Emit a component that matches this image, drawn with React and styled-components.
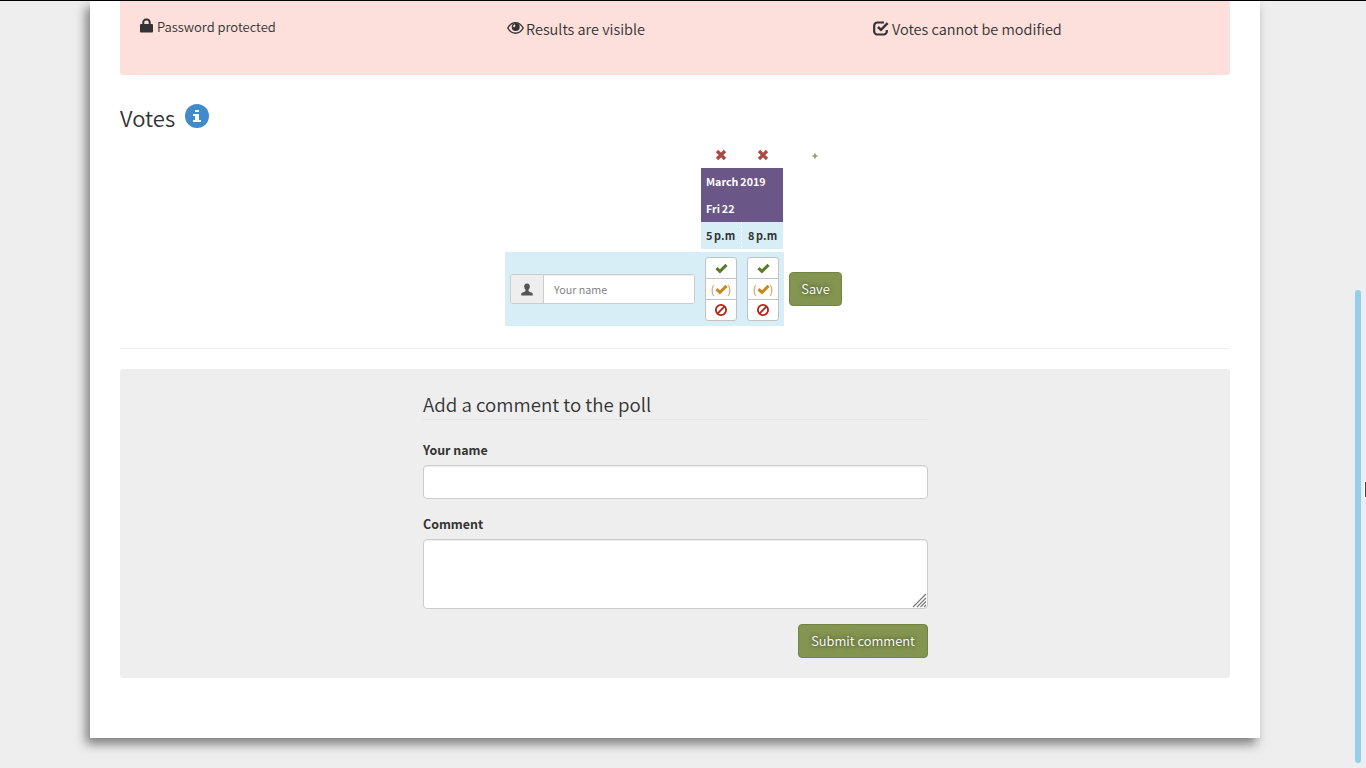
import React from 'react';
import styled, { createGlobalStyle } from 'styled-components';

const Global = createGlobalStyle`
  *, *::before, *::after { box-sizing: border-box; }
  html, body { margin: 0; height: 768px; overflow: hidden; }
  body {
    background: #eee;
    color: #333;
    font-family: "Noto Sans CJK SC", "Noto Sans", sans-serif;
    font-size: 14px;
    font-weight: 350;
    line-height: 20px;
  }
  h2, h3, p { margin: 0; font-weight: 350; }
  input, textarea, button { font-family: inherit; font-weight: 350; margin: 0; outline: none; }
`;

const Screen = styled.div`
  position: relative;
  height: 768px;
  padding: 0 106px 0 90px;
  border-top: 1px solid #000;
  overflow: hidden;
`;

const Page = styled.main`
  height: 737px;
  padding: 0 30px;
  background: #fff;
  box-shadow: -4px 6px 10px 0 rgba(50, 50, 50, 0.6);
`;

const Alert = styled.section`
  display: grid;
  grid-template-columns: 367px 366px 1fr;
  height: 74px;
  padding: 14px 20px 0;
  background: #fddfdb;
  border-radius: 0 0 3px 3px;
`;

const Fact = styled.p`
  display: flex;
  align-items: flex-start;
  gap: ${(p) => p.$gap}px;
  padding-top: ${(p) => p.$top || 0}px;
  font-size: ${(p) => p.$size || 14.5}px;
  line-height: 24px;
  white-space: nowrap;
  svg { flex: none; margin-top: ${(p) => p.$iconTop || 0}px; }
`;

const VotesTitle = styled.h2`
  display: flex;
  align-items: flex-start;
  gap: 10px;
  height: 68px;
  padding-top: 27px;
  font-size: 22px;
  line-height: 30px;
  svg { flex: none; margin: 2px 0 0 -0.5px; }
`;

const Poll = styled.div`
  display: grid;
  grid-template-columns: 196px 41px 42px 63px;
  grid-template-rows: 25px 54px 27px 3px 74px;
  width: 342px;
  margin-left: 385px;
`;

const IconCell = styled.div`
  display: flex;
  justify-content: center;
  align-items: flex-start;
  grid-row: 1;
  grid-column: ${(p) => p.$col};
  padding-top: ${(p) => p.$top}px;
  padding-right: ${(p) => p.$shift || 0}px;
`;

const Month = styled.div`
  grid-row: 2;
  grid-column: 2 / 4;
  width: 82px;
  padding-left: 5px;
  background: #6a5687;
  color: #fff;
  font-size: 10.7px;
  font-weight: 700;
  line-height: 27px;
  word-spacing: -0.5px;
`;

const Hour = styled.div`
  grid-row: 3;
  grid-column: ${(p) => p.$col};
  width: ${(p) => (p.$last ? 41 : 42)}px;
  padding-left: ${(p) => (p.$last ? 6 : 5)}px;
  border-right: ${(p) => (p.$last ? '0' : '2px dashed #fff')};
  background: #d8eef6;
  font-size: 10.9px;
  font-weight: 700;
  line-height: 27px;
  height: 27px;
  white-space: nowrap;
  word-spacing: -1px;
  letter-spacing: 0.1px;
  ${(p) => !p.$last && `
    border-image: repeating-linear-gradient(#fff 0 2px, #d8eef6 2px 4px) 0 2 0 0;
  `}
`;

const VoteRow = styled.div`
  grid-row: 5;
  grid-column: 1 / 4;
  display: flex;
  align-items: flex-start;
  gap: 10px;
  padding: 5px;
  background: #d8eef6;
`;

const NameGroup = styled.div`
  display: flex;
  flex: none;
  width: 185px;
  height: 30px;
  margin-top: 17px;
  border: 1px solid #ccc;
  border-radius: 3px;
  background: #fff;
  overflow: hidden;
`;

const Addon = styled.span`
  display: flex;
  align-items: center;
  justify-content: center;
  width: 33px;
  border-right: 1px solid #ccc;
  background: #eee;
`;

const NameInput = styled.input`
  flex: 1;
  min-width: 0;
  padding: 0 10px;
  border: 0;
  background: #fff;
  box-shadow: inset 0 1px 1px rgba(0, 0, 0, 0.075);
  font-size: 10.8px;
  &::placeholder { color: #777; opacity: 1; }
`;

const Choices = styled.div`
  flex: none;
  width: 32px;
  height: 64px;
  border: 1px solid #c2c2c2;
  border-radius: 3px;
  background: #fff;
`;

const Choice = styled.div`
  display: flex;
  align-items: center;
  justify-content: center;
  height: ${(p) => p.$h}px;
  border-bottom: ${(p) => (p.$last ? '0' : '1px solid #c2c2c2')};
  color: #c88a1d;
  font-size: 11px;
  font-weight: 400;
  line-height: 18px;
`;

const Button = styled.button`
  height: 34px;
  width: ${(p) => p.$w}px;
  padding: 0 0 1px;
  border: 1px solid #738440;
  border-radius: 4px;
  background: #849551;
  color: #fff;
  font-size: 12.9px;
  line-height: 20px;
  text-shadow: 0 0 5px rgba(0, 0, 0, 0.65);
  white-space: nowrap;
`;

const SaveCell = styled.div`
  grid-row: 5;
  grid-column: 4;
  padding: 20px 0 0 5px;
`;

const Rule = styled.div`
  height: 1px;
  margin: 22px 0 20px;
  background: #eee;
`;

const CommentPanel = styled.section`
  height: 309px;
  padding: 20px 302px 0 303px;
  background: #eee;
  border-radius: 3px;
`;

const Legend = styled.h3`
  height: 31px;
  border-bottom: 1px solid #e3e3e3;
  font-size: 18.7px;
  line-height: 29px;
`;

const Label = styled.label`
  display: block;
  height: 20px;
  margin: ${(p) => p.$top}px 0 5px;
  font-size: 12.4px;
  font-weight: 700;
`;

const Field = styled.input`
  display: block;
  width: 505px;
  height: 34px;
  border: 1px solid #ccc;
  border-radius: 4px;
  background: #fff;
  box-shadow: inset 0 1px 1px rgba(0, 0, 0, 0.075);
`;

const AreaWrap = styled.div`
  position: relative;
  height: 70px;
  svg { position: absolute; right: 1px; bottom: 1px; }
`;

const Area = styled(Field)`
  height: 70px;
  resize: none;
`;

const Actions = styled.div`
  display: flex;
  justify-content: flex-end;
  margin-top: 15px;
`;

const ScrollTrack = styled.div`
  position: absolute;
  top: 0;
  right: 0;
  width: 16px;
  height: 768px;
  padding: 289px 5px 0;
  background: #eceef0;
`;

const ScrollThumb = styled.div`
  width: 6px;
  height: 473px;
  border-radius: 3px;
  background: #93cfe9;
`;

const Pointer = styled.div`
  position: absolute;
  right: 0;
  top: 480px;
  width: 2px;
  height: 17px;
  border: 1px solid #fff;
  border-right: 0;
  background: #444;
`;

const LockIcon = () => (
  <svg width="14" height="15" viewBox="0 0 14 15">
    <path d="M3.300 7V4.200a2.600 2.600 0 0 1 2.600-2.600h1.200a2.600 2.600 0 0 1 2.600 2.600V7" fill="none" stroke="#333" strokeWidth="2" />
    <rect x="0" y="6" width="13" height="8.500" rx="0.9" fill="#333" />
  </svg>
);

const EyeIcon = () => (
  <svg width="17" height="14" viewBox="0 0 17 14">
    <path d="M.8 7C2.8 3.600 5.400 1.600 8.500 1.600S14.200 3.600 16.200 7C14.200 10.400 11.600 12.200 8.500 12.200S2.800 10.400.8 7Z" fill="none" stroke="#333" strokeWidth="1.400" />
    <circle cx="8.700" cy="6" r="4" fill="#333" />
    <path d="M5.900 5.500q.3-2 2-2.300l.5 1.800-1.300 1.600Z" fill="#fddfdb" />
  </svg>
);

const CheckBoxIcon = () => (
  <svg width="16" height="15" viewBox="0 0 16 15">
    <path d="M11 1.500H4.300A3.100 3.100 0 0 0 1.200 4.600v5.800a3.100 3.100 0 0 0 3.100 3.100h6.400a3.100 3.100 0 0 0 3.100-3.100V9" fill="none" stroke="#333" strokeWidth="2.200" />
    <path d="M5 6 8 8.800 14.600 2.200" fill="none" stroke="#333" strokeWidth="2.500" />
  </svg>
);

const InfoIcon = () => (
  <svg width="24" height="24" viewBox="0 0 24 24">
    <circle cx="12" cy="12" r="12" fill="#428bca" />
    <path d="M10 6h4v2h-4zM8 10h6v6h2v2H8v-2h2v-4H8z" fill="#fff" />
  </svg>
);

const CrossIcon = () => (
  <svg width="12" height="12" viewBox="0 0 12 12">
    <path d="M2 2 10 10M10 2 2 10" stroke="#a94c45" strokeWidth="3.300" />
  </svg>
);

const PlusIcon = () => (
  <svg width="6" height="6" viewBox="0 0 6 6">
    <path d="M3 .5v5M.5 3h5" stroke="#8f9b70" strokeWidth="1.600" />
  </svg>
);

const UserIcon = () => (
  <svg width="12" height="13" viewBox="0 0 12 13">
    <path d="M6 .4C4 .4 3.100 1.700 3.200 3.500c0 1.600.7 2.600 1.300 3.300v1.300C4.300 9 .3 9.400.2 11v1.400h11.600V11c-.1-1.600-4.100-2-4.300-2.900V6.800c.6-.7 1.300-1.700 1.300-3.300C8.900 1.700 8 .4 6 .4Z" fill="#555" />
  </svg>
);

const CheckIcon = ({ color }) => (
  <svg width="13" height="11" viewBox="0 0 13 11">
    <path d="M.4 6.300 2.600 4.100 4.900 6.300 10.400.8 12.600 3 4.900 10.600Z" fill={color} />
  </svg>
);

const BanIcon = () => (
  <svg width="12" height="12" viewBox="0 0 12 12">
    <circle cx="6" cy="6" r="5.100" fill="none" stroke="#b02210" strokeWidth="1.800" />
    <path d="M2.700 9.300 9.300 2.700" stroke="#b02210" strokeWidth="1.800" />
  </svg>
);

const GripIcon = () => (
  <svg width="15" height="15" viewBox="0 0 15 15">
    <path d="M1 14 14 1M5 14l9-9M8.500 14 14 8.500M12 14l2-2" stroke="#777" strokeWidth="1.100" />
  </svg>
);

const VoteChoices = () => (
  <Choices>
    <Choice $h={21}><CheckIcon color="#5c7a2c" /></Choice>
    <Choice $h={21}>(<CheckIcon color="#c88a1d" />)</Choice>
    <Choice $h={20} $last><BanIcon /></Choice>
  </Choices>
);

export default function App() {
  return (
    <>
      <Global />
      <Screen>
        <Page>
          <Alert>
            <Fact $size={13} $iconTop={3} $top={0} $gap={3}><LockIcon />Password protected</Fact>
            <Fact $iconTop={4} $top={2} $gap={2}><EyeIcon />Results are visible</Fact>
            <Fact $iconTop={4} $top={2} $gap={3}><CheckBoxIcon />Votes cannot be modified</Fact>
          </Alert>
          <VotesTitle>Votes<InfoIcon /></VotesTitle>
          <Poll>
            <IconCell $col={2} $top={6} $shift={1}><CrossIcon /></IconCell>
            <IconCell $col={3} $top={6}><CrossIcon /></IconCell>
            <IconCell $col={4} $top={10} $shift={1}><PlusIcon /></IconCell>
            <Month>March 2019<br />Fri 22</Month>
            <Hour $col={2}>5 p.m</Hour>
            <Hour $col={3} $last>8 p.m</Hour>
            <VoteRow>
              <NameGroup>
                <Addon><UserIcon /></Addon>
                <NameInput placeholder="Your name" />
              </NameGroup>
              <VoteChoices />
              <VoteChoices />
            </VoteRow>
            <SaveCell><Button $w={53}>Save</Button></SaveCell>
          </Poll>
          <Rule />
          <CommentPanel>
            <Legend>Add a comment to the poll</Legend>
            <Label $top={20}>Your name</Label>
            <Field />
            <Label $top={15}>Comment</Label>
            <AreaWrap>
              <Area as="textarea" />
              <GripIcon />
            </AreaWrap>
            <Actions><Button $w={130}>Submit comment</Button></Actions>
          </CommentPanel>
        </Page>
        <ScrollTrack><ScrollThumb /></ScrollTrack>
        <Pointer />
      </Screen>
    </>
  );
}
